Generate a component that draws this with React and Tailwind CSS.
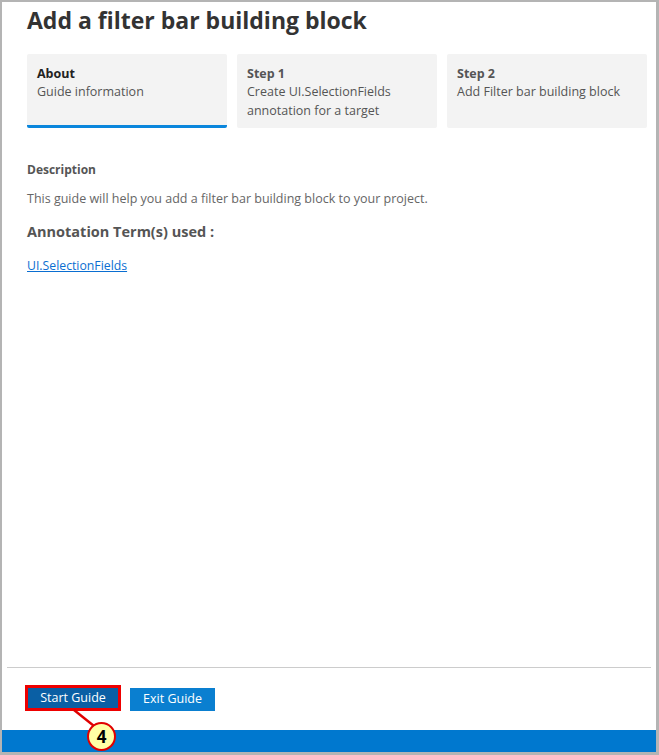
export default function App() {
  const steps = [
    { title: 'About', text: 'Guide information', active: true },
    { title: 'Step 1', text: 'Create UI.SelectionFields annotation for a target' },
    { title: 'Step 2', text: 'Add Filter bar building block' },
  ];

  return (
    <div
      className="w-[659px] h-[755px] bg-[#b4b4b4] pt-[2px] pl-[2px] pr-[3px] pb-[3px]"
      style={{ fontFamily: '"Open Sans", "Noto Sans", sans-serif' }}
    >
      <div className="relative flex h-full flex-col bg-white">
        <div className="flex-1 pl-[25px] pr-[9px]">
          <h1 className="mt-[3px] text-[23px] font-bold leading-[30px] text-[#333]">
            Add a filter bar building block
          </h1>

          <div className="mt-[19px] grid grid-cols-3 gap-[10px]">
            {steps.map((s) => (
              <div
                key={s.title}
                className={
                  'h-[74px] rounded-[2px] bg-[#f3f3f3] px-[10px] pt-[10px] ' +
                  (s.active ? 'border-b-[3px] border-[#0a86dc]' : '')
                }
              >
                <p className={'text-[12.5px] font-bold leading-[19px] ' + (s.active ? 'text-[#222]' : 'text-[#555]')}>
                  {s.title}
                </p>
                <p className="text-[12.5px] leading-[18.5px] text-[#555]">{s.text}</p>
              </div>
            ))}
          </div>

          <p className="mt-[33px] text-[12px] font-bold leading-[18px] text-[#555]">Description</p>
          <p className="mt-[11px] text-[12.5px] leading-[18px] text-[#666]">
            This guide will help you add a filter bar building block to your project.
          </p>
          <p className="mt-[14px] text-[14.5px] font-bold leading-[20px] text-[#555]">Annotation Term(s) used :</p>
          <a href="#" className="mt-[15px] inline-block text-[12.25px] leading-[18px] text-[#0a6ed1] underline">
            UI.SelectionFields
          </a>
        </div>

        <div className="mx-[5px] border-t border-[#cccccc]" />
        <div className="flex items-start gap-[9px] px-[23px] pt-[17px] pb-[19px]">
          <div className="border-[3px] border-[#ee0000]">
            <button className="block h-[20px] w-[90px] bg-[#0a5fa4] text-[12.5px] leading-[20px] text-white">
              Start Guide
            </button>
          </div>
          <button className="mt-[3px] h-[23px] w-[85px] bg-[#0a7fd0] text-[12.5px] text-white">Exit Guide</button>
        </div>
        <div className="h-[22px] bg-[#0078cf]" />

        <svg className="absolute left-[70px] top-[706px]" width="50" height="46" viewBox="0 0 50 46">
          <line x1="2" y1="2" x2="22" y2="18" stroke="#e00000" strokeWidth="2.5" />
        </svg>
        <div className="absolute left-[85px] top-[720px] flex h-[29px] w-[29px] items-center justify-center rounded-full border-[2px] border-[#e00000] bg-[#ffffa6] text-[17px] font-bold text-black">
          4
        </div>
      </div>
    </div>
  );
}
